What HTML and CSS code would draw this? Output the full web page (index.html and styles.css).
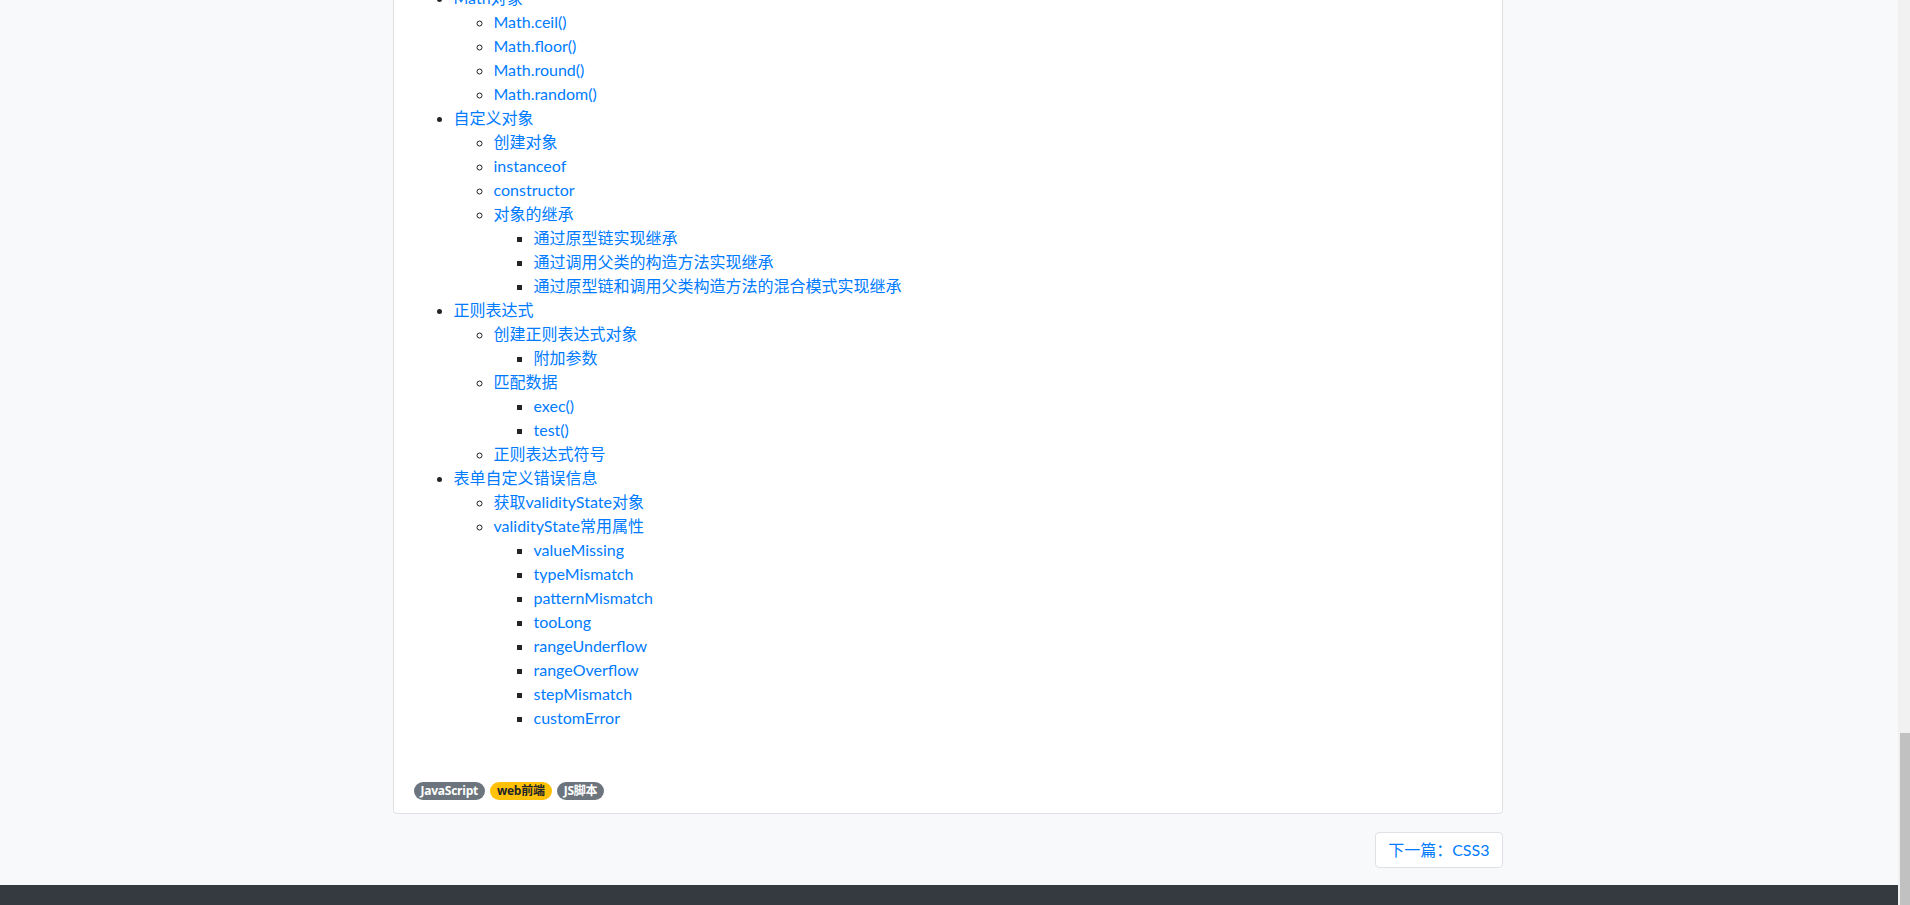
FILE: index.html
```html
<!DOCTYPE html>
<html lang="zh-CN">
<head>
<meta charset="utf-8">
<title>JavaScript</title>
<link rel="stylesheet" href="styles.css">
</head>
<body>
<div class="page">
  <div class="main">
    <div class="content">
      <div class="container">
        <div class="card">
          <div class="card-body">
            <ul class="toc">
              <li><a href="#">Math对象</a>
                <ul>
                  <li><a href="#">Math.ceil()</a></li>
                  <li><a href="#">Math.floor()</a></li>
                  <li><a href="#">Math.round()</a></li>
                  <li><a href="#">Math.random()</a></li>
                </ul>
              </li>
              <li><a href="#">自定义对象</a>
                <ul>
                  <li><a href="#">创建对象</a></li>
                  <li><a href="#">instanceof</a></li>
                  <li><a href="#">constructor</a></li>
                  <li><a href="#">对象的继承</a>
                    <ul>
                      <li><a href="#">通过原型链实现继承</a></li>
                      <li><a href="#">通过调用父类的构造方法实现继承</a></li>
                      <li><a href="#">通过原型链和调用父类构造方法的混合模式实现继承</a></li>
                    </ul>
                  </li>
                </ul>
              </li>
              <li><a href="#">正则表达式</a>
                <ul>
                  <li><a href="#">创建正则表达式对象</a>
                    <ul>
                      <li><a href="#">附加参数</a></li>
                    </ul>
                  </li>
                  <li><a href="#">匹配数据</a>
                    <ul>
                      <li><a href="#">exec()</a></li>
                      <li><a href="#">test()</a></li>
                    </ul>
                  </li>
                  <li><a href="#">正则表达式符号</a></li>
                </ul>
              </li>
              <li><a href="#">表单自定义错误信息</a>
                <ul>
                  <li><a href="#">获取validityState对象</a></li>
                  <li><a href="#">validityState常用属性</a>
                    <ul>
                      <li><a href="#">valueMissing</a></li>
                      <li><a href="#">typeMismatch</a></li>
                      <li><a href="#">patternMismatch</a></li>
                      <li><a href="#">tooLong</a></li>
                      <li><a href="#">rangeUnderflow</a></li>
                      <li><a href="#">rangeOverflow</a></li>
                      <li><a href="#">stepMismatch</a></li>
                      <li><a href="#">customError</a></li>
                    </ul>
                  </li>
                </ul>
              </li>
            </ul>
            <div class="tags">
              <span class="badge badge-secondary">JavaScript</span>
              <span class="badge badge-warning">web前端</span>
              <span class="badge badge-secondary">JS脚本</span>
            </div>
          </div>
        </div>
        <div class="pager">
          <a class="page-link" href="#">下一篇：CSS3</a>
        </div>
      </div>
    </div>
    <footer class="footer"></footer>
  </div>
  <div class="scrollbar"><div class="thumb"></div></div>
</div>
</body>
</html>
```

FILE: styles.css
```css
html, body {
  margin: 0;
  padding: 0;
  height: 905px;
  overflow: hidden;
}
body {
  background: #f8f9fa;
  color: #212529;
  font-family: Lato, "Noto Sans CJK SC", sans-serif;
  font-size: 16px;
  line-height: 24px;
}
a {
  color: #007bff;
  text-decoration: none;
}
.page {
  display: flex;
  height: 905px;
}
.main {
  flex: 1;
  display: flex;
  flex-direction: column;
  min-width: 0;
  padding-right: 3px;
}
.content {
  flex: 1;
  min-height: 0;
  overflow: hidden;
  display: flex;
  flex-direction: column;
  justify-content: flex-end;
}
.container {
  width: 1140px;
  box-sizing: border-box;
  padding: 0 15px;
  margin: 0 auto;
  flex-shrink: 0;
}
.card {
  background: #fff;
  border: 1px solid #dfe1e4;
  border-radius: 4px;
}
.card-body {
  padding: 20px 20px 13px;
}
.toc, .toc ul {
  margin: 0;
  padding-left: 40px;
}
.toc {
  margin-bottom: 16px;
}
.tags {
  display: flex;
  gap: 5px;
  margin-top: 52px;
}
.badge {
  display: inline-block;
  font-family: "Open Sans", "Noto Sans CJK SC", sans-serif;
  font-size: 12px;
  font-weight: 700;
  line-height: 12px;
  padding: 3px 7px;
  letter-spacing: -0.25px;
  border-radius: 10rem;
  color: #fff;
}
.badge-secondary {
  background: #6c757d;
}
.badge-warning {
  background: #ffc107;
  color: #212529;
}
.pager {
  display: flex;
  justify-content: flex-end;
  margin: 18px 0 17px;
}
.page-link {
  display: block;
  background: #fff;
  border: 1px solid #dee2e6;
  border-radius: 4px;
  padding: 6px 12px;
  line-height: 22px;
}
.footer {
  height: 20px;
  background: #343a40;
  margin-right: -3px;
}
.scrollbar {
  width: 12px;
  background: #f1f1f1;
  display: flex;
  flex-direction: column;
  justify-content: flex-end;
}
.thumb {
  height: 172px;
  margin-left: 2px;
  background: #c1c1c1;
}
```
